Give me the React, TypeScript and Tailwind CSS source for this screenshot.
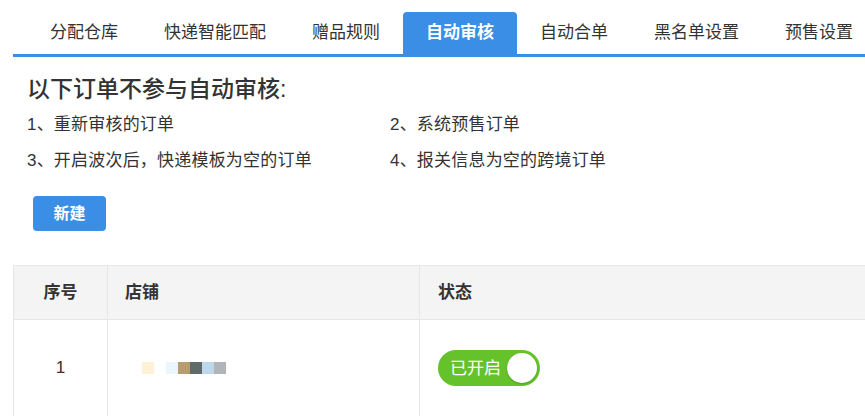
import React from 'react';

const tabs = ['分配仓库', '快递智能匹配', '赠品规则', '自动审核', '自动合单', '黑名单设置', '预售设置'];

const rules = [
    '1、重新审核的订单',
    '2、系统预售订单',
    '3、开启波次后，快递模板为空的订单',
    '4、报关信息为空的跨境订单',
];

// blurred shop name in the screenshot
const shopPixels = ['#fdf1d6', '#ffffff', '#e9f7fd', '#b89b6e', '#5e6b69', '#bdd7ec', '#b1b4b9'];

function Toggle({ on }: { on: boolean }) {
    return (
        <div className="flex items-center w-[102px] h-[36px] rounded-full bg-[#66c22b] pl-[12px] pr-[3px]">
            <span className="flex-1 text-white text-[17px] leading-none">{on ? '已开启' : '已关闭'}</span>
            <span className="w-[30px] h-[30px] rounded-full bg-white shadow-[0_1px_2px_rgba(0,0,0,0.2)]" />
        </div>
    );
}

export default function App() {
    return (
        <div
            className="w-[865px] h-[416px] overflow-hidden bg-white text-[#333]"
            style={{ fontFamily: '"Liberation Sans", "Noto Sans CJK SC", sans-serif' }}
        >
            {/* Tabs */}
            <div className="ml-[13px] pt-[12px]">
                <div className="flex pl-[14px] border-b-[3px] border-[#3a8ee6] whitespace-nowrap">
                    {tabs.map((t) => (
                        <div
                            key={t}
                            className={
                                t === '自动审核'
                                    ? 'h-[42px] flex items-center px-[23px] rounded-t-[4px] bg-[#3a8ee6] text-white font-bold text-[17px]'
                                    : 'h-[42px] flex items-center px-[23px] text-[17px] text-[#333]'
                            }
                        >
                            {t}
                        </div>
                    ))}
                </div>
            </div>

            {/* Rules */}
            <div className="pl-[27px] pt-[20px]">
                <h2 className="text-[23px] leading-[24px] font-medium text-[#333]">以下订单不参与自动审核:</h2>
                <div className="grid grid-cols-[363px_1fr] mt-[13px]">
                    {rules.map((r) => (
                        <div key={r} className="h-[36px] text-[17px] leading-[22px] tracking-[0.2px]">
                            {r}
                        </div>
                    ))}
                </div>
                <button className="mt-[10px] ml-[6px] w-[73px] h-[35px] rounded-[4px] bg-[#3a8ee6] text-white font-bold text-[16px]">
                    新建
                </button>
            </div>

            {/* Table */}
            <div className="ml-[13px] mt-[34px] w-[900px] border-t border-l border-[#e6e6e6]">
                <div className="grid grid-cols-[94px_312px_1fr] h-[54px] bg-[#f4f4f4] border-b border-[#e6e6e6] text-[17px] font-bold">
                    <div className="flex items-center justify-center border-r border-[#e6e6e6]">序号</div>
                    <div className="flex items-center pl-[17px] border-r border-[#e6e6e6]">店铺</div>
                    <div className="flex items-center pl-[18px]">状态</div>
                </div>
                <div className="grid grid-cols-[94px_312px_1fr] h-[100px]">
                    <div className="flex items-center justify-center border-r border-[#e6e6e6] text-[17px] pb-[4px]">1</div>
                    <div className="flex items-center pl-[34px] border-r border-[#e6e6e6] pb-[4px]">
                        {shopPixels.map((c, i) => (
                            <span key={i} className="w-[12px] h-[12px]" style={{ backgroundColor: c }} />
                        ))}
                    </div>
                    <div className="flex items-center pl-[18px] pb-[4px]">
                        <Toggle on />
                    </div>
                </div>
            </div>
        </div>
    );
}
